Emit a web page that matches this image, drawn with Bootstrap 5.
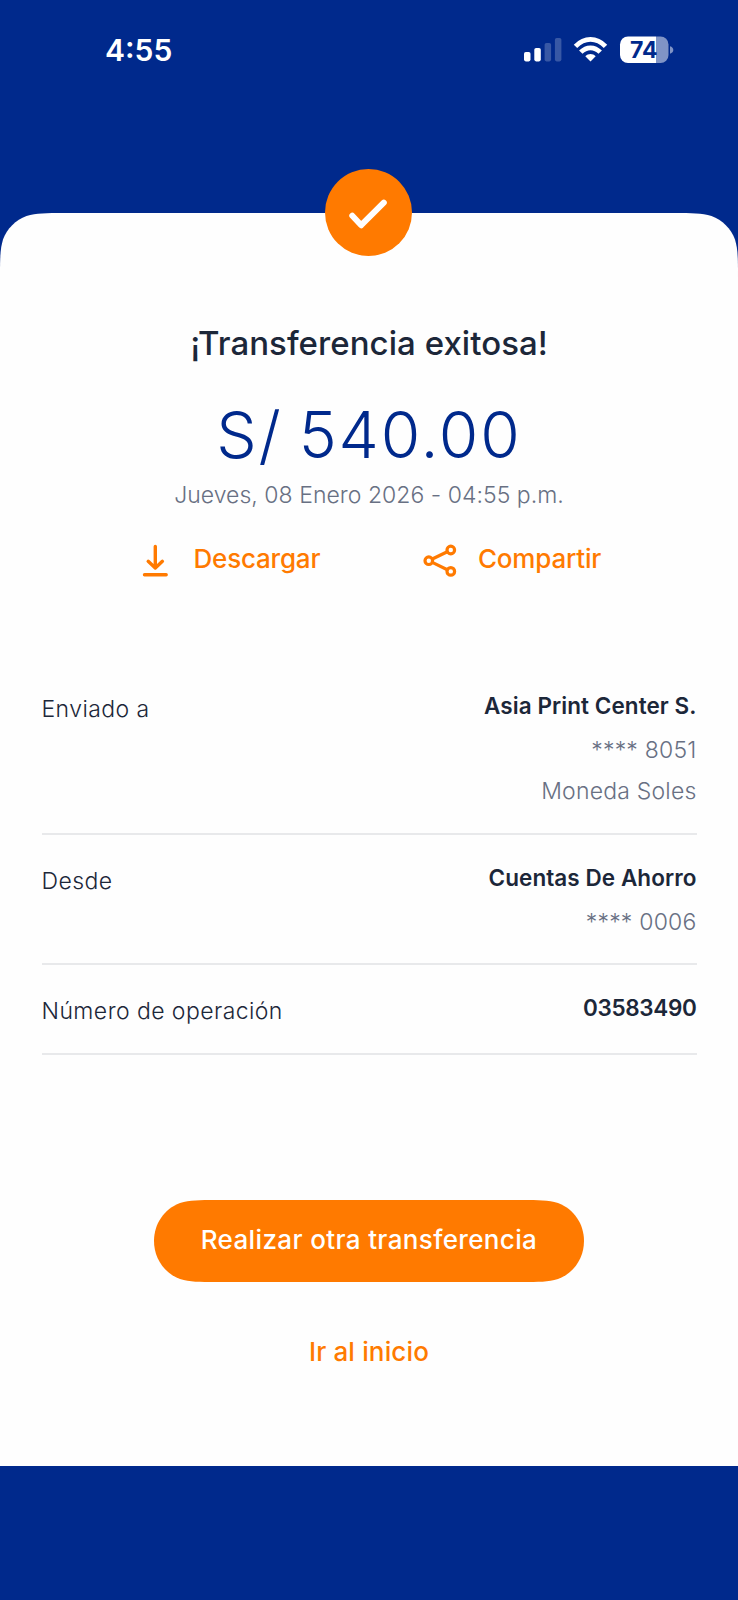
<!DOCTYPE html>
<html lang="es">
<head>
<meta charset="utf-8">
<meta name="viewport" content="width=device-width, initial-scale=1">
<title>Transferencia exitosa</title>
<link href="https://cdn.jsdelivr.net/npm/bootstrap@5.3.0/dist/css/bootstrap.min.css" rel="stylesheet">
<style>
  :root { --navy: #00298c; --orange: #ff7a00; --ink: #1c2739; --slate: #687083; }
  body { background: var(--navy); color: var(--ink); font-family: Inter, Roboto, "Liberation Sans", sans-serif; min-height: 1600px; }
  .status-bar { height: 213px; padding: 32px 64px 0 105px; }
  .clock { font-size: 30px; font-weight: 600; line-height: 36px; }
  .sheet { height: 1253px; padding: 110px 41px 0; isolation: isolate; }
  /* white panel with continuous-curvature top corners */
  .sheet::before { content: ""; position: absolute; inset: 0; z-index: -1; background: #fefefe;
    clip-path: path("M0 1253V64C0 46 0 36.500 3 26.500C7 15.700 15.700 7 26.500 3C36.500 0 46 0 64 0H674C692 0 701.500 0 711.500 3C722.300 7 731 15.700 735 26.500C738 36.500 738 46 738 64V1253Z"); }
  .seal { top: -44px; left: 325px; width: 87px; height: 87px; background: var(--orange); }
  .headline { font-size: 33px; font-weight: 500; line-height: 40px; letter-spacing: .05px; }
  .amount { font-size: 64px; font-weight: 330; line-height: 70px; letter-spacing: 1.9px; word-spacing: -4px; color: var(--navy); margin-top: 37px; }
  .stamp { font-size: 23px; font-weight: 300; line-height: 30px; letter-spacing: .03px; color: var(--slate); margin-top: 10px; }
  .actions { margin-top: 34px; height: 30px; padding-left: 99px; grid-template-columns: 282px 1fr; }
  .action { color: var(--orange); font-size: 26px; font-weight: 500; line-height: 30px; letter-spacing: -.2px; gap: 21.5px; }
  .action + .action { gap: 24px; }
  .details { margin: 89px .5px 0; }
  .detail { padding: 28px 0 27px; border-bottom: 2px solid #e8e9eb; line-height: 30px; }
  .middle { padding-bottom: 26px; }
  .detail dt { font-size: 23px; font-weight: 300; letter-spacing: .43px; padding-top: 3px; }
  .detail dd { margin: 0; text-align: right; }
  .holder { font-size: 22.5px; font-weight: 600; letter-spacing: .07px; }
  .extra { font-size: 23px; font-weight: 300; letter-spacing: .2px; color: var(--slate); margin-top: 14px; }
  .extra + .extra { margin-top: 11px; }
  .number { letter-spacing: -.35px; }
  .again { width: 430px; height: 82px; margin-top: 145px; background: var(--orange); color: #fff; border: 0; border-radius: 0; font-size: 26px; font-weight: 500; line-height: 30px; letter-spacing: .36px; padding: 0 0 3px;
    clip-path: path("M62 0C45 0 36 0 26 3C10 9 0 24 0 41S10 73 26 79C36 82 45 82 62 82H368C385 82 394 82 404 79C420 73 430 58 430 41S420 9 404 3C394 0 385 0 368 0Z"); }
  .home { color: var(--orange); font-size: 26px; font-weight: 500; line-height: 30px; letter-spacing: .15px; margin-top: 55px; }
</style>
</head>
<body>
<header class="status-bar d-flex justify-content-between align-items-start text-white">
  <div class="clock">4:55</div>
  <svg width="152" height="32" viewBox="522 32 152 32" aria-label="Señal, wifi y batería">
    <g fill="#fff">
      <rect x="524" y="52" width="6.500" height="9.400" rx="1.800"/>
      <rect x="534.300" y="48" width="6.500" height="13.400" rx="1.800"/>
      <rect x="544.600" y="43" width="6.500" height="18.400" rx="1.800" opacity=".22"/>
      <rect x="554.900" y="38" width="6.500" height="23.400" rx="1.800" opacity=".22"/>
    </g>
    <g fill="none" stroke="#fff" stroke-width="4.800">
      <path d="M575.500 46.300C584.500 37 596.500 37 605.500 46.300"/>
      <path d="M580.800 52.200C586.500 46.300 594.500 46.300 600.200 52.200"/>
    </g>
    <path d="M585.300 56.200C588.300 53.300 592.700 53.300 595.700 56.200L590.500 61.500Z" fill="#fff"/>
    <path d="M656 36.500H660.500A8 8 0 0 1 668.500 44.500V55A8 8 0 0 1 660.500 63H656Z" fill="#8094c6"/>
    <path d="M656 36.500H628A8 8 0 0 0 620 44.500V55A8 8 0 0 0 628 63H656Z" fill="#fff"/>
    <path d="M670 46.300C674.400 47.500 674.400 52.500 670 53.700Z" fill="#8094c6"/>
    <text x="630" y="58" font-size="23" font-weight="700" fill="#00298c">74</text>
  </svg>
</header>

<main class="sheet position-relative">
  <div class="seal position-absolute rounded-circle">
    <svg class="d-block" width="87" height="87" viewBox="325 169 87 87" fill="none" stroke="#fff" stroke-width="6" stroke-linecap="round" stroke-linejoin="round"><path d="M352.300 215.800L361.200 225.200L383.800 202.600"/></svg>
  </div>

  <section class="text-center">
    <h1 class="headline mb-0">¡Transferencia exitosa!</h1>
    <div class="amount">S/ 540.00</div>
    <div class="stamp">Jueves, 08 Enero 2026 - 04:55 p.m.</div>
  </section>

  <nav class="actions d-grid">
    <a href="#" class="action d-flex text-decoration-none">
      <svg width="32" height="34" viewBox="140 544 32 34" fill="none" stroke="currentColor" stroke-width="3.400" stroke-linecap="round" stroke-linejoin="round"><path d="M155.300 546.500V567.800M148.200 561.300L155.300 568L162.400 561.300M144.500 574.800H166.200"/></svg>
      <span>Descargar</span>
    </a>
    <a href="#" class="action d-flex text-decoration-none">
      <svg width="32" height="34" viewBox="421.600 544 32 34" overflow="visible" fill="none" stroke="currentColor" stroke-width="3.200"><circle cx="428.400" cy="560.700" r="3.800"/><circle cx="450.400" cy="550" r="3.800"/><circle cx="450.400" cy="571.400" r="3.800"/><path d="M431.900 559L446.900 551.700M431.900 562.400L446.900 569.700"/></svg>
      <span>Compartir</span>
    </a>
  </nav>

  <dl class="details mb-0">
    <div class="detail d-flex justify-content-between">
      <dt>Enviado a</dt>
      <dd><div class="holder">Asia Print Center S.</div><div class="extra">**** 8051</div><div class="extra">Moneda Soles</div></dd>
    </div>
    <div class="detail middle d-flex justify-content-between">
      <dt>Desde</dt>
      <dd><div class="holder">Cuentas De Ahorro</div><div class="extra">**** 0006</div></dd>
    </div>
    <div class="detail d-flex justify-content-between">
      <dt>Número de operación</dt>
      <dd><div class="holder number">03583490</div></dd>
    </div>
  </dl>

  <div class="d-flex flex-column align-items-center">
    <button type="button" class="btn again">Realizar otra transferencia</button>
    <a href="#" class="home text-decoration-none">Ir al inicio</a>
  </div>
</main>
<script src="https://cdn.jsdelivr.net/npm/bootstrap@5.3.0/dist/js/bootstrap.bundle.min.js"></script>
</body>
</html>
